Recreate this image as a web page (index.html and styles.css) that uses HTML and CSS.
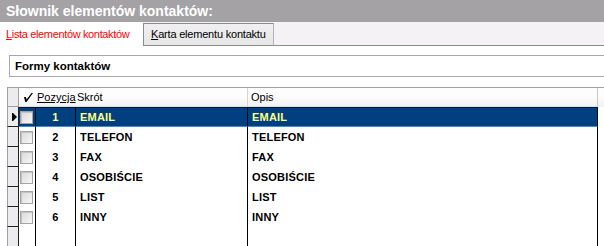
FILE: index.html
```html
<!DOCTYPE html>
<html lang="pl">
<head>
<meta charset="utf-8">
<title>Słownik elementów kontaktów</title>
<link rel="stylesheet" href="styles.css">
</head>
<body>
<div class="win">
  <div class="title">Słownik elementów kontaktów:</div>
  <div class="tabs">
    <div class="tab tab-active"><u>L</u>ista elementów kontaktów</div>
    <div class="tab tab-idle"><u>K</u>arta elementu kontaktu</div>
    <div class="tab-fill"></div>
  </div>
  <div class="content">
    <div class="section">Formy kontaktów</div>
    <div class="grid">
      <div class="row head">
        <div class="ind"></div>
        <div class="cell chk"><svg class="tick" width="10" height="9" viewBox="0 0 10 9"><path d="M1 4 L3 4 L3.6 6.5 L8.5 0 L10 0 L3.5 9 L2.2 9 Z" fill="#000"/></svg></div>
        <div class="cell pos"><u>Pozycja</u></div>
        <div class="cell skr">Skrót</div>
        <div class="cell opis">Opis</div>
      </div>
      <div class="row sel">
        <div class="ind"><svg class="ptr" width="6" height="8" viewBox="0 0 6 8"><rect x="0" y="0" width="1" height="8" fill="#000"/><polygon points="1,0 5,4 1,8" fill="#000"/></svg></div>
        <div class="cell chk"><span class="box"></span></div>
        <div class="cell pos">1</div>
        <div class="cell skr">EMAIL</div>
        <div class="cell opis">EMAIL</div>
      </div>
      <div class="row">
        <div class="ind"></div>
        <div class="cell chk"><span class="box"></span></div>
        <div class="cell pos">2</div>
        <div class="cell skr">TELEFON</div>
        <div class="cell opis">TELEFON</div>
      </div>
      <div class="row">
        <div class="ind"></div>
        <div class="cell chk"><span class="box"></span></div>
        <div class="cell pos">3</div>
        <div class="cell skr">FAX</div>
        <div class="cell opis">FAX</div>
      </div>
      <div class="row">
        <div class="ind"></div>
        <div class="cell chk"><span class="box"></span></div>
        <div class="cell pos">4</div>
        <div class="cell skr">OSOBIŚCIE</div>
        <div class="cell opis">OSOBIŚCIE</div>
      </div>
      <div class="row">
        <div class="ind"></div>
        <div class="cell chk"><span class="box"></span></div>
        <div class="cell pos">5</div>
        <div class="cell skr">LIST</div>
        <div class="cell opis">LIST</div>
      </div>
      <div class="row">
        <div class="ind"></div>
        <div class="cell chk"><span class="box"></span></div>
        <div class="cell pos">6</div>
        <div class="cell skr">INNY</div>
        <div class="cell opis">INNY</div>
      </div>
      <div class="row">
        <div class="ind"></div>
        <div class="cell chk"></div>
        <div class="cell pos"></div>
        <div class="cell skr"></div>
        <div class="cell opis"></div>
      </div>
    </div>
  </div>
</div>
</body>
</html>
```
FILE: styles.css
```css
html, body {
  margin: 0;
  padding: 0;
  background: #ffffff;
}
body {
  width: 604px;
  height: 246px;
  overflow: hidden;
  font-family: "Liberation Sans", Arial, sans-serif;
}
.win {
  width: 604px;
  height: 246px;
  display: flex;
  flex-direction: column;
  background: #ffffff;
}
.title {
  height: 22px;
  line-height: 22px;
  background: #a4a2a4;
  color: #ffffff;
  font-weight: bold;
  font-size: 14px;
  padding-left: 6px;
  white-space: nowrap;
}
.tabs {
  display: flex;
  height: 24px;
  background: #f4f2f4;
}
.tab {
  font-size: 11px;
  white-space: nowrap;
}
.tab-active {
  width: 137px;
  padding-left: 6px;
  background: #ffffff;
  color: #ff0000;
  letter-spacing: -0.35px;
  line-height: 24px;
}
.tab-idle {
  margin-top: 1px;
  width: 122px;
  padding-left: 7px;
  height: 21px;
  line-height: 21px;
  border: 1px solid #8c8c8c;
  border-right-color: #b4b4b4;
  background: linear-gradient(#f0f0f0, #e6e6e6);
  color: #000000;
  letter-spacing: -0.2px;
}
.tab-fill {
  flex: 1;
  border-bottom: 1px solid #8c8c8c;
}
.content {
  flex: 1;
  background: #ffffff;
  padding-top: 9px;
}
.section {
  margin-left: 9px;
  height: 20px;
  line-height: 20px;
  border: 1px solid #a8a8a8;
  border-right: none;
  padding-left: 5px;
  font-size: 11.5px;
  font-weight: bold;
  color: #000000;
}
.grid {
  margin-top: 10px;
  margin-left: 7px;
  border-top: 1px solid #a0a0a0;
}
.row {
  display: grid;
  grid-template-columns: 12px 16px 40px 172px 351px;
  height: 20px;
  font-size: 11px;
  font-weight: bold;
  letter-spacing: 0.2px;
  color: #000000;
}
.ind {
  border-left: 1px solid #a0a0a0;
  border-right: 1px solid #202020;
  border-bottom: 1px solid #202020;
  background: #ecebed;
  display: flex;
  align-items: center;
  padding-left: 4px;
  box-sizing: border-box;
}
.cell {
  display: flex;
  align-items: center;
  white-space: nowrap;
  overflow: hidden;
  box-sizing: border-box;
}
.chk {
  padding-left: 1px;
}
.pos {
  justify-content: center;
  border-left: 1px solid #000000;
}
.skr {
  border-left: 1px solid #000000;
  padding-left: 4px;
}
.opis {
  border-left: 1px solid #000000;
  border-right: 1px solid #000000;
  padding-left: 4px;
}
.box {
  width: 13px;
  height: 13px;
  box-sizing: border-box;
  border: 1px solid #a4a4a4;
  background: linear-gradient(135deg, #d8d8d8, #f8f8f8);
  box-shadow: inset 1px 1px 0 #c4c4c4;
}
.head {
  height: 19px;
  font-weight: normal;
  letter-spacing: 0;
  background: linear-gradient(#fdfdfd 0%, #fdfdfd 45%, #f1f1f5 100%);
}
.head .ind {
  border-right-color: #a0a0a0;
  border-bottom: 1px solid #a0a0a0;
}
.head .cell {
  border-bottom: 1px solid #dcdcdc;
  border-left-color: transparent;
}
.head .chk {
  padding-left: 4px;
}
.head .pos {
  justify-content: flex-start;
  padding-left: 1px;
  overflow: visible;
}
.head .skr {
  padding-left: 1px;
}
.head .opis {
  border-left: 1px solid #d4d4d4;
  border-right: 1px solid #c8c8c8;
  padding-left: 3px;
}
.sel .cell {
  background: #004080;
  color: #ffff80;
  border-top: 1px solid #001830;
  border-bottom: 1px solid #3c8ce0;
}
.sel .chk {
  border-left: none;
}
.tick {
  display: block;
}
.ptr {
  display: block;
}
```
